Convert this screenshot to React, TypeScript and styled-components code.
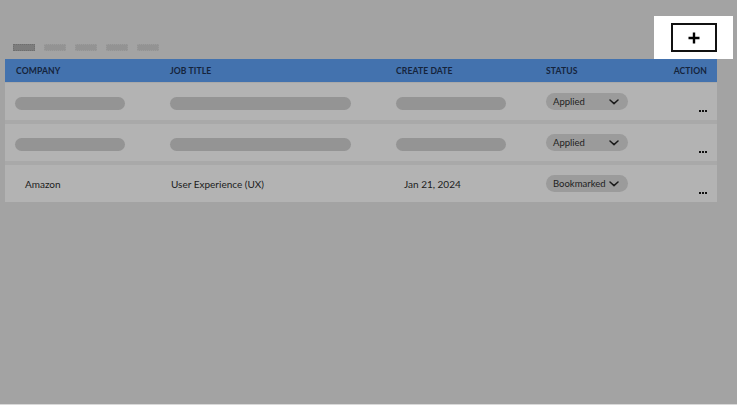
import React from "react";
import styled, { createGlobalStyle } from "styled-components";

const GlobalStyle = createGlobalStyle`
  html, body { margin: 0; padding: 0; }
  body {
    background: #d9d9d9;
    font-family: Lato, "Noto Sans", "Liberation Sans", sans-serif;
  }
  * { box-sizing: border-box; }
`;

const Screen = styled.div`
  width: 737px;
  height: 404px;
  background: #a3a3a3;
  padding-top: 16px;
`;

const Toolbar = styled.div`
  display: flex;
  align-items: flex-end;
  justify-content: space-between;
  height: 43px;
  padding: 0 4px 0 13px;
`;

const Tabs = styled.div`
  display: flex;
  gap: 9px;
  margin-bottom: 8px;
`;

const Tab = styled.div<{ $active?: boolean }>`
  width: 22px;
  height: 7px;
  background: ${(p) => (p.$active ? "#7c7c7c" : "#939393")};
  background-image: ${(p) =>
    p.$active
      ? "radial-gradient(circle, #9a9a9a 0.6px, transparent 0.7px)"
      : "none"};
  background-size: 2px 2px;
  border: 1px dotted ${(p) => (p.$active ? "#6e6e6e" : "#9c9c9c")};
`;

const Spotlight = styled.div`
  background: #ffffff;
  padding: 7px 16px 7px 17px;
`;

const AddButton = styled.button`
  width: 46px;
  height: 29px;
  border: 2px solid #111111;
  background-color: #ffffff;
  background-image: radial-gradient(circle, #e2e2e2 0.5px, transparent 0.6px);
  background-size: 4px 4px;
  display: flex;
  align-items: center;
  justify-content: center;
  padding: 0;
  cursor: pointer;
`;

const Table = styled.div`
  margin: 0 20px 0 5px;
  display: flex;
  flex-direction: column;
`;

const cols = `
  display: grid;
  grid-template-columns: 154px 226px 150px 1fr auto;
  padding: 0 10px 0 11px;
  align-items: center;
`;

const HeaderRow = styled.div`
  ${cols}
  height: 23px;
  background: #4372ae;
`;

const HeaderCell = styled.div<{ $right?: boolean }>`
  font-size: 8.6px;
  font-weight: 700;
  color: #15243c;
  letter-spacing: 0.1px;
  text-align: ${(p) => (p.$right ? "right" : "left")};
`;

const Body = styled.div`
  display: flex;
  flex-direction: column;
  gap: 4px;
  padding-top: 1px;
  background: #a9a9a9;
`;

const Row = styled.div`
  ${cols}
  height: 37px;
  background: #b3b3b3;
`;

const Bar = styled.div<{ $w: number; $shift?: number }>`
  width: ${(p) => p.$w}px;
  height: 13px;
  border-radius: 7px;
  background: #949494;
  margin-top: 3px;
  margin-left: ${(p) => p.$shift ?? 0}px;
`;

const Text = styled.div<{ $pad?: number }>`
  font-size: 10px;
  color: #1c1c1c;
  padding-left: ${(p) => p.$pad ?? 0}px;
`;

const Pill = styled.div`
  width: 82px;
  height: 17px;
  border-radius: 9px;
  background: #9b9b9b;
  display: flex;
  align-items: center;
  padding: 0 9px 0 7px;
  font-size: 9.5px;
  color: #1e1e1e;
`;

const PillLabel = styled.span`
  flex: 1;
`;

const Dots = styled.div`
  align-self: end;
  padding-bottom: 8px;
  display: flex;
  gap: 1px;
  justify-content: flex-end;
`;

const Dot = styled.span`
  width: 2px;
  height: 2px;
  background: #111;
`;

const Chevron = () => (
  <svg width="10" height="6" viewBox="0 0 10 6" fill="none">
    <path d="M1 1l4 3.6L9 1" stroke="#1a1a1a" strokeWidth="1.5" strokeLinecap="round" strokeLinejoin="round" />
  </svg>
);

const Plus = () => (
  <svg width="12" height="12" viewBox="0 0 12 12">
    <path d="M6 0.5v11M0.5 6h11" stroke="#000" strokeWidth="2.4" />
  </svg>
);

const Status = ({ label }: { label: string }) => (
  <Pill>
    <PillLabel>{label}</PillLabel>
    <Chevron />
  </Pill>
);

const More = () => (
  <Dots aria-label="More actions">
    <Dot />
    <Dot />
    <Dot />
  </Dots>
);

export default function App() {
  return (
    <>
      <GlobalStyle />
      <Screen>
        <Toolbar>
          <Tabs>
            <Tab $active />
            <Tab />
            <Tab />
            <Tab />
            <Tab />
          </Tabs>
          <Spotlight>
            <AddButton aria-label="Add">
              <Plus />
            </AddButton>
          </Spotlight>
        </Toolbar>
        <Table>
          <HeaderRow>
            <HeaderCell>COMPANY</HeaderCell>
            <HeaderCell>JOB TITLE</HeaderCell>
            <HeaderCell>CREATE DATE</HeaderCell>
            <HeaderCell>STATUS</HeaderCell>
            <HeaderCell $right>ACTION</HeaderCell>
          </HeaderRow>
          <Body>
            <Row>
              <Bar $w={110} $shift={-1} />
              <Bar $w={181} />
              <Bar $w={110} />
              <Status label="Applied" />
              <More />
            </Row>
            <Row>
              <Bar $w={110} $shift={-1} />
              <Bar $w={181} />
              <Bar $w={110} />
              <Status label="Applied" />
              <More />
            </Row>
            <Row>
              <Text $pad={9}>Amazon</Text>
              <Text $pad={1}>User Experience (UX)</Text>
              <Text $pad={8}>Jan 21, 2024</Text>
              <Status label="Bookmarked" />
              <More />
            </Row>
          </Body>
        </Table>
      </Screen>
    </>
  );
}
